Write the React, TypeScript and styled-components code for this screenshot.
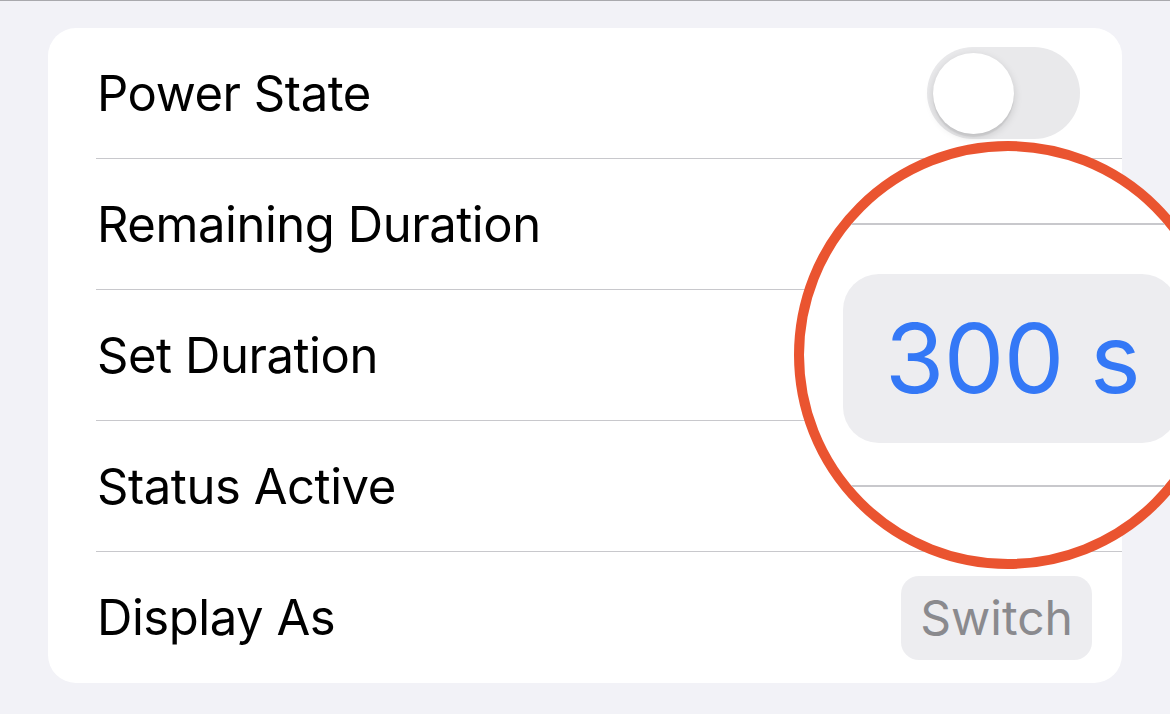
import styled, { createGlobalStyle } from "styled-components";

const GlobalStyle = createGlobalStyle`
  html, body {
    margin: 0;
    padding: 0;
    background: #f2f2f7;
  }
  body {
    font-family: Inter, "Noto Sans", "Liberation Sans", sans-serif;
    -webkit-font-smoothing: antialiased;
  }
`;

const Page = styled.div`
  position: relative;
  width: 1170px;
  height: 714px;
  box-sizing: border-box;
  border-top: 1px solid #a9a9ad;
  padding: 27px 48px 0 48px;
  overflow: hidden;
`;

const Card = styled.div`
  background: #ffffff;
  border-radius: 28px;
  width: 1074px;
  display: flex;
  flex-direction: column;
  overflow: hidden;
`;

const Row = styled.div<{ $last?: boolean }>`
  display: flex;
  align-items: center;
  justify-content: space-between;
  margin-left: 48px;
  padding: 0 30px 0 1px;
  border-bottom: ${(p) => (p.$last ? "none" : "1px solid #c8c8cc")};
  height: ${(p) => (p.$last ? "131px" : "130px")};
`;

const Label = styled.span`
  font-size: 49px;
  color: #000000;
  letter-spacing: -0.45px;
`;

const Toggle = styled.div`
  width: 153px;
  height: 92px;
  border-radius: 46px;
  background: #e9e9eb;
  margin-right: 12px;
  display: flex;
  align-items: center;
  padding-left: 6px;
  box-sizing: border-box;
`;

const Knob = styled.div`
  width: 81px;
  height: 81px;
  border-radius: 50%;
  background: #ffffff;
  box-shadow: 0 3px 8px rgba(0, 0, 0, 0.15), 0 3px 1px rgba(0, 0, 0, 0.06);
`;

const Pill = styled.div<{ $big?: boolean }>`
  display: flex;
  align-items: center;
  justify-content: center;
  background: #ededf0;
  border-radius: ${(p) => (p.$big ? "36px" : "18px")};
  height: ${(p) => (p.$big ? "169px" : "84px")};
  padding: ${(p) => (p.$big ? "0 38px 0 42px" : "0 19px")};
  font-size: ${(p) => (p.$big ? "96px" : "48px")};
  letter-spacing: ${(p) => (p.$big ? "-0.6px" : "0")};
  color: ${(p) => (p.$big ? "#3478f6" : "#8a8a8e")};
`;

const Lens = styled.div`
  position: absolute;
  left: 794px;
  top: 140px;
  width: 428px;
  height: 428px;
  box-sizing: border-box;
  border-radius: 50%;
  border: 10px solid #ea5430;
  background: #ffffff;
  overflow: hidden;
  display: flex;
  flex-direction: column;
  padding-top: 72px;
`;

const LensLine = styled.div`
  height: 2px;
  background: #c8c8cc;
  flex-shrink: 0;
`;

const LensBody = styled.div`
  height: 260px;
  display: flex;
  align-items: center;
  justify-content: flex-start;
  padding-left: 39px;
  padding-top: 6px;
  box-sizing: border-box;
`;

const rows = ["Remaining Duration", "Set Duration", "Status Active"];

export default function App() {
  return (
    <>
      <GlobalStyle />
      <Page>
        <Card>
          <Row>
            <Label>Power State</Label>
            <Toggle>
              <Knob />
            </Toggle>
          </Row>
          {rows.map((r) => (
            <Row key={r}>
              <Label>{r}</Label>
            </Row>
          ))}
          <Row $last>
            <Label>Display As</Label>
            <Pill>Switch</Pill>
          </Row>
        </Card>
        <Lens>
          <LensLine />
          <LensBody>
            <Pill $big>300 s</Pill>
          </LensBody>
          <LensLine />
        </Lens>
      </Page>
    </>
  );
}
